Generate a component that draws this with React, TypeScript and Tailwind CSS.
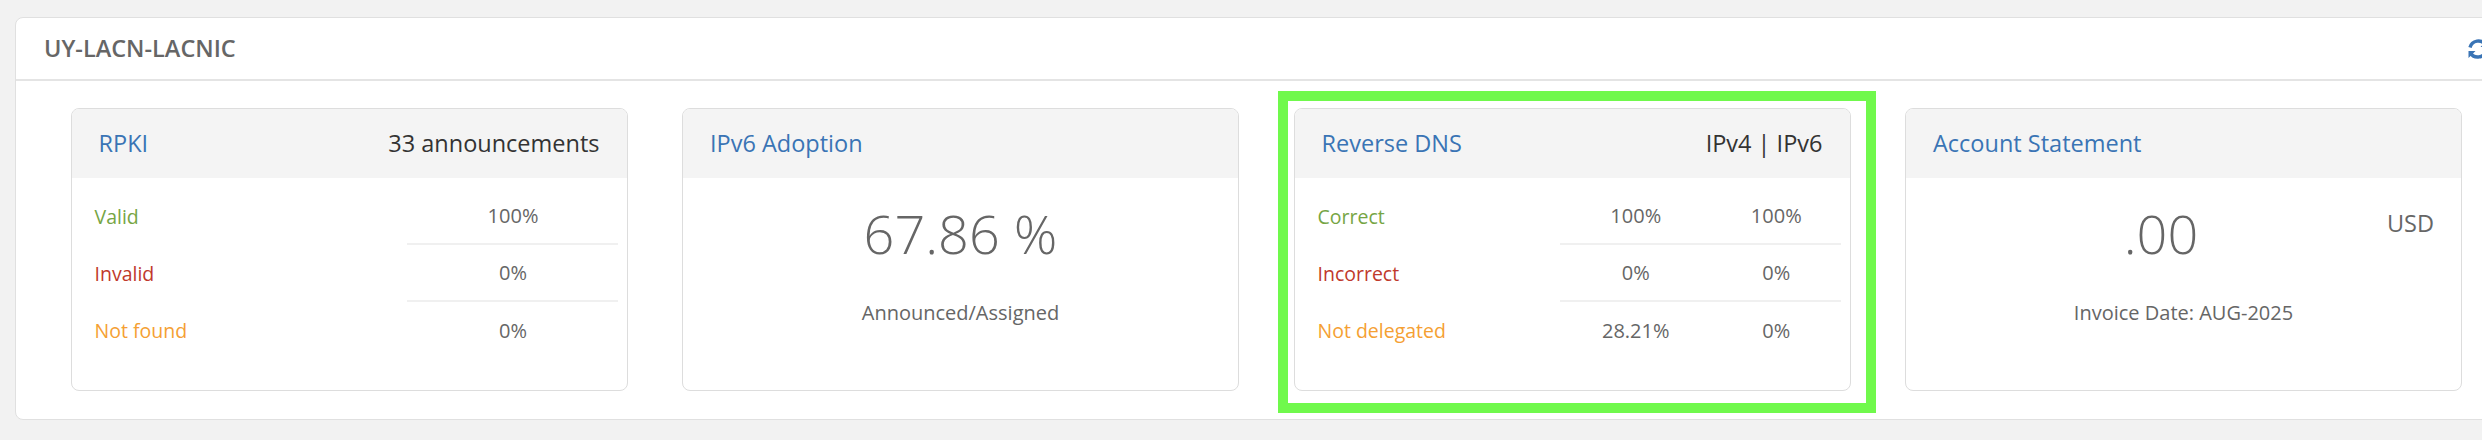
import { ReactNode } from 'react';

const rpkiRows = [
  { label: 'Valid', color: 'text-[#76a544]', values: ['100%'] },
  { label: 'Invalid', color: 'text-[#c0392b]', values: ['0%'] },
  { label: 'Not found', color: 'text-[#f5a033]', values: ['0%'] },
];

const dnsRows = [
  { label: 'Correct', color: 'text-[#76a544]', values: ['100%', '100%'] },
  { label: 'Incorrect', color: 'text-[#c0392b]', values: ['0%', '0%'] },
  { label: 'Not delegated', color: 'text-[#f5a033]', values: ['28.21%', '0%'] },
];

function Card({ title, aside, children }: { title: string; aside?: string; children: ReactNode }) {
  return (
    <div className="h-[283px] overflow-hidden rounded-[8px] border border-[#dddddd] bg-white">
      <div className="flex h-[69px] items-center justify-between bg-[#f4f4f4] pl-[27px] pr-[27px] text-[23.5px]">
        <span className="text-[#3a74b5]">{title}</span>
        {aside && <span className="text-[#333333]">{aside}</span>}
      </div>
      {children}
    </div>
  );
}

function StatusTable({
  rows,
  labelWidth,
  valuePad,
}: {
  rows: { label: string; color: string; values: string[] }[];
  labelWidth: string;
  valuePad: string;
}) {
  return (
    <div className="pr-[9px] pt-[10px]">
      {rows.map((row, i) => (
        <div key={row.label} className="flex h-[57px] items-center">
          <span className={`${labelWidth} shrink-0 pl-[23px] text-[19.5px] ${row.color}`}>{row.label}</span>
          <div
            className={`flex h-full flex-1 items-center text-[20px] text-[#666666] ${
              i < rows.length - 1 ? 'border-b-2 border-[#f0f0f0]' : ''
            }`}
          >
            {row.values.map((value, j) => (
              <span key={j} className={`flex-1 text-center ${valuePad}`}>
                {value}
              </span>
            ))}
          </div>
        </div>
      ))}
    </div>
  );
}

export default function App() {
  return (
    <div className="h-[440px] w-[2482px] overflow-hidden bg-[#f2f2f2] pl-[15px] pt-[17px] font-['Open_Sans',sans-serif]">
      <div className="h-[403px] w-[2520px] rounded-[8px] border border-[#e0e0e0] bg-white">
        <div className="flex h-[63px] items-center justify-between border-b-2 border-[#e4e4e4] pl-[28px] pr-[44px]">
          <h1 className="text-[23.5px] font-semibold text-[#666666]">UY-LACN-LACNIC</h1>
          <svg viewBox="0 0 24 24" className="h-[24px] w-[24px] text-[#3a74b5]" fill="none" stroke="currentColor" strokeWidth="3.4">
            <path d="M4 10.5A8.5 8.5 0 0 1 19.5 8M20 13.5A8.5 8.5 0 0 1 4.5 16" />
            <path d="M21.5 3v7h-7zM2.5 21v-7h7z" fill="currentColor" stroke="none" />
          </svg>
        </div>

        <div className="grid w-[2393px] grid-cols-[repeat(4,557px)] gap-x-[54.5px] pl-[54.5px] pt-[27px]">
          <Card title="RPKI" aside="33 announcements">
            <StatusTable rows={rpkiRows} labelWidth="w-[335px]" valuePad="pl-[2px]" />
          </Card>

          <Card title="IPv6 Adoption">
            <div className="flex flex-col items-center text-[#666666]">
              <span className="mt-[17px] text-[54px] font-light leading-[76px]">67.86 %</span>
              <span className="mt-[27px] text-[20px]">Announced/Assigned</span>
            </div>
          </Card>

          <div className="relative">
            <Card title="Reverse DNS" aside="IPv4 | IPv6">
              <StatusTable rows={dnsRows} labelWidth="w-[265px]" valuePad="pl-[12px]" />
            </Card>
            <div className="pointer-events-none absolute -bottom-[22px] -left-[16px] -right-[25px] -top-[17px] border-[10px] border-[#70f94c]" />
          </div>

          <Card title="Account Statement">
            <div className="flex flex-col items-center text-[#666666]">
              <div className="relative w-full">
                <div className="mt-[17px] w-[510px] text-center text-[54px] font-light leading-[76px]">.00</div>
                <span className="absolute right-[27px] top-[28px] text-[23.5px]">USD</span>
              </div>
              <span className="mt-[27px] text-[20px]">Invoice Date: AUG-2025</span>
            </div>
          </Card>
        </div>
      </div>
    </div>
  );
}
